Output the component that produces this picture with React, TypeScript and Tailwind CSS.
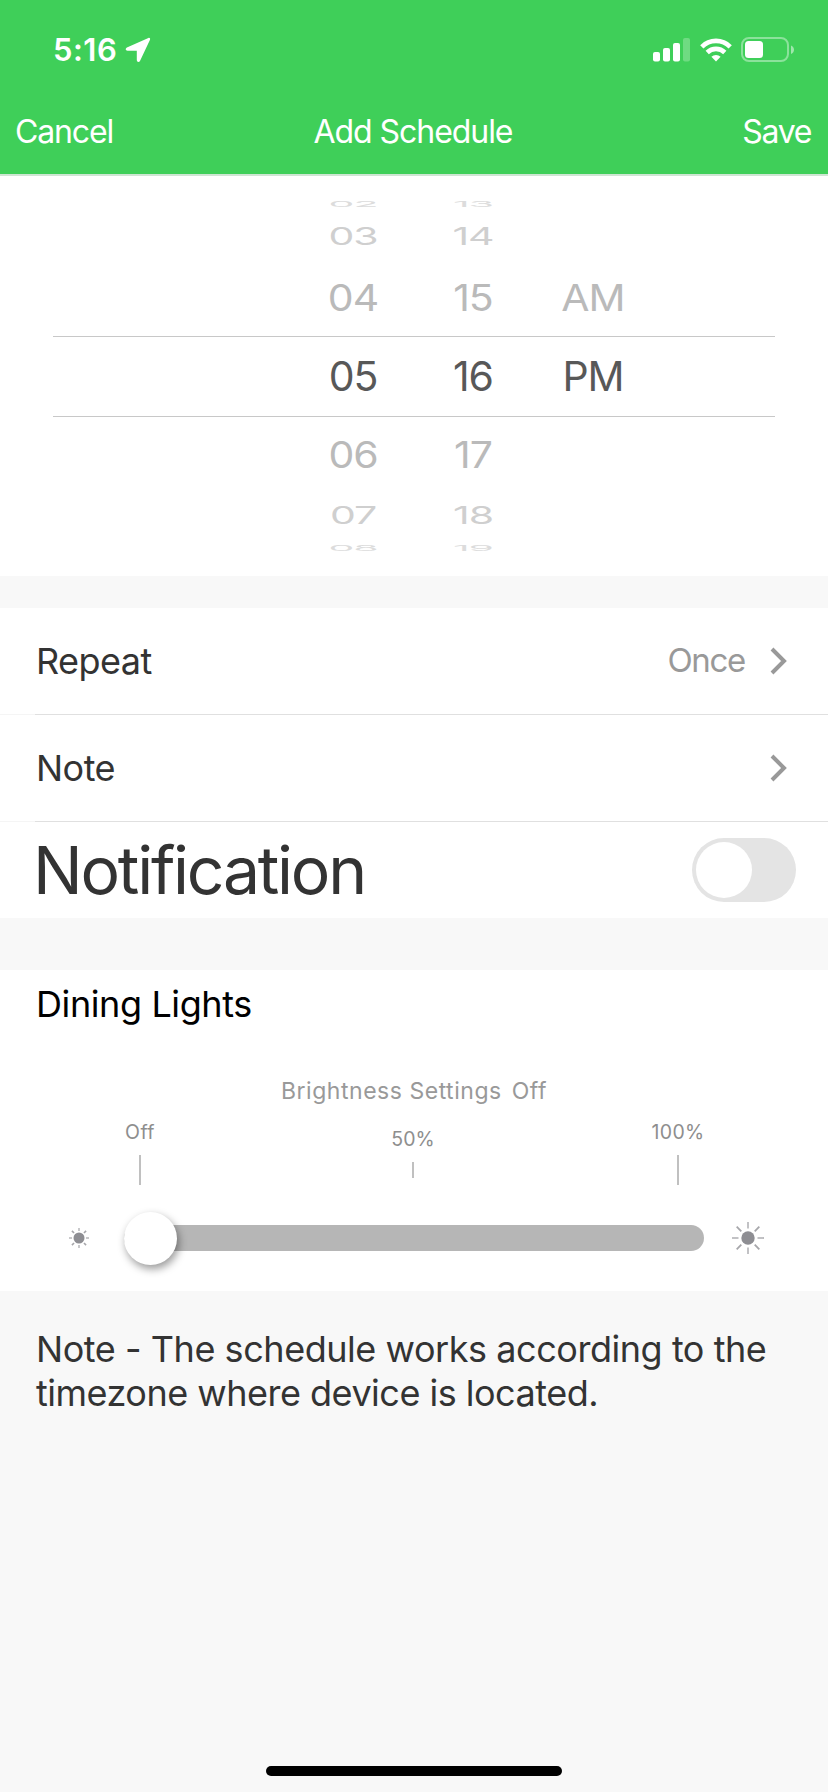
type WheelRow = {
  cells: string[];
  rowClass: string;
  textClass: string;
};

const wheelRows: WheelRow[] = [
  { cells: ["02", "13", ""], rowClass: "h-1.5", textClass: "scale-y-[0.2] text-[#dcdcdc]" },
  { cells: ["03", "14", ""], rowClass: "h-[59px]", textClass: "scale-y-[0.6] text-[#cfcfcf]" },
  { cells: ["04", "15", "AM"], rowClass: "h-[62px] mb-2", textClass: "scale-y-[0.9] text-[#bababa]" },
  { cells: ["05", "16", "PM"], rowClass: "h-[81px]", textClass: "text-[#585858]" },
  { cells: ["06", "17", ""], rowClass: "h-[62px] mt-[6px]", textClass: "scale-y-[0.9] text-[#bababa]" },
  { cells: ["07", "18", ""], rowClass: "h-[61px]", textClass: "scale-y-[0.6] text-[#cfcfcf]" },
  { cells: ["08", "19", ""], rowClass: "h-1", textClass: "scale-y-[0.2] text-[#dcdcdc]" },
];

function StatusBar() {
  return (
    <div className="flex h-[100px] items-center justify-between pl-[53px] pr-[33px] text-white">
      <div className="flex items-center gap-2">
        <span className="text-[31px] font-semibold tracking-[0.015em]">5:16</span>
        <svg width="26" height="26" viewBox="0 0 26 26" fill="currentColor">
          <path d="M23.4 1 1.900 10.500C.1 11.400.5 13.700 2.500 13.700l9.300.1v9.200c0 2.100 2.400 2.600 3.300.700L25 2.700C25.500 1.400 24.600.500 23.400 1z" />
        </svg>
      </div>
      <div className="flex items-center gap-[9px]">
        <svg width="38" height="24" viewBox="0 0 38 24" fill="currentColor">
          <rect x="0" y="14" width="7" height="9.500" rx="2" />
          <rect x="10" y="10" width="7" height="13.500" rx="2" />
          <rect x="20" y="5" width="7" height="18.500" rx="2" />
          <rect x="30" y="0" width="7" height="23.500" rx="2" opacity=".25" />
        </svg>
        <svg width="32" height="24" viewBox="0 0 32 24" fill="none" stroke="currentColor" strokeWidth="4.600">
          <path d="M1.800 8.800a20 20 0 0 1 28.400 0" />
          <path d="M7.200 14.500a12.500 12.500 0 0 1 17.600 0" />
          <path d="M16 23.500l-4.600-4.700a6.500 6.500 0 0 1 9.200 0z" fill="currentColor" stroke="none" />
        </svg>
        <svg width="54" height="26" viewBox="0 0 54 26" fill="currentColor">
          <rect x="1" y="1" width="46" height="23" rx="7" fill="none" stroke="currentColor" strokeWidth="2" opacity=".4" />
          <rect x="4" y="4" width="18" height="17" rx="3.500" />
          <path d="M50 8.500c4 1.500 4 7 0 8.500z" opacity=".5" />
        </svg>
      </div>
    </div>
  );
}

function NavBar() {
  return (
    <div className="grid h-[74px] grid-cols-3 items-start pl-[15px] pr-[17px] pt-3 text-[32px] leading-10 text-white">
      <span className="tracking-[-0.036em]">Cancel</span>
      <span className="whitespace-nowrap text-center tracking-[-0.033em]">Add Schedule</span>
      <span className="text-right tracking-[-0.042em]">Save</span>
    </div>
  );
}

function TimeWheel() {
  return (
    <section className="h-[400px] bg-white px-[53px] pt-[25px]">
      {wheelRows.map((row) => {
        const selected = row.cells[0] === "05";
        return (
          <div
            key={row.cells[0]}
            className={`flex items-center pl-[240px] ${row.rowClass} ${selected ? "border-y border-[#c8c8c8]" : ""}`}
          >
            {row.cells.map((cell, i) => (
              <span
                key={i}
                className={`w-[120px] text-center text-[41px] leading-none tracking-[-0.025em] ${row.textClass}`}
              >
                {cell}
              </span>
            ))}
          </div>
        );
      })}
    </section>
  );
}

function Chevron() {
  return (
    <svg width="17" height="28" viewBox="0 0 17 28" fill="none" stroke="#999" strokeWidth="4">
      <path d="M2 2l12 12L2 26" />
    </svg>
  );
}

function Divider() {
  return (
    <div className="flex h-px">
      <div className="w-[35px] bg-[#f5f5f5]" />
      <div className="flex-1 bg-[#e0e0e0]" />
    </div>
  );
}

function SettingRow({ label, value }: { label: string; value?: string }) {
  return (
    <div className="flex h-[106px] items-center justify-between bg-white pl-9 pr-[41px]">
      <span className="text-[36px] tracking-[-0.015em]">{label}</span>
      <div className="flex items-center gap-[25px]">
        <span className="text-[33px] tracking-[-0.04em] text-[#999]">{value}</span>
        <Chevron />
      </div>
    </div>
  );
}

type SunProps = {
  size: number;
  core: number;
  inner: number;
  ray: number;
};

function Sun({ size, core, inner, ray }: SunProps) {
  const c = size / 2;
  return (
    <svg width={size} height={size} viewBox={`0 0 ${size} ${size}`}>
      <circle cx={c} cy={c} r={core} fill="#8e8e93" />
      {[0, 45, 90, 135, 180, 225, 270, 315].map((angle) => (
        <path
          key={angle}
          d={`M${c} 0V${c - inner}`}
          stroke={angle % 90 === 0 ? "#bcbcbf" : "#a6a6aa"}
          strokeWidth={ray}
          transform={`rotate(${angle} ${c} ${c})`}
        />
      ))}
    </svg>
  );
}

function Brightness() {
  return (
    <section className="h-[321px] bg-white">
      <h2 className="pl-9 pt-[14px] text-[36px] leading-10 tracking-[-0.011em] text-black">Dining Lights</h2>
      <p className="mt-[52px] flex h-[30px] items-center justify-center gap-2.5 text-[23px] text-[#999]">
        <span className="tracking-[0.023em]">Brightness Settings</span>
        <span className="tracking-[0.023em]">Off</span>
      </p>
      <div className="mt-1.5 flex justify-between pl-[100px] pr-[110px] text-[19.500px] leading-6 tracking-[0.02em] text-[#8e8e8e]">
        <div className="flex w-20 flex-col items-center gap-[11px] pt-2">
          <span>Off</span>
          <span className="h-[30px] w-0.5 bg-[#c0c0c0]" />
        </div>
        <div className="ml-2 flex w-20 flex-col items-center gap-[11px] pt-[15px]">
          <span className="tracking-normal">50%</span>
          <span className="h-4 w-0.5 bg-[#c0c0c0]" />
        </div>
        <div className="flex w-20 flex-col items-center gap-[11px] pt-2">
          <span>100%</span>
          <span className="h-[30px] w-0.5 bg-[#c0c0c0]" />
        </div>
      </div>
      <div className="mt-[26px] flex items-center pl-[69px] pr-16">
        <Sun size={20} core={5.5} inner={7} ray={1.6} />
        <div className="ml-[35px] mr-7 flex h-[54px] flex-1 items-center">
          <div className="flex h-[26px] flex-1 items-center rounded-full bg-[#b6b6b6]">
            <div className="size-[53px] rounded-full bg-white shadow-[2px_4px_9px_rgba(0,0,0,0.4)]" />
          </div>
        </div>
        <Sun size={32} core={6.7} inner={9.5} ray={1.8} />
      </div>
    </section>
  );
}

export default function App() {
  return (
    <main className="flex h-[1792px] w-[828px] flex-col bg-[#f8f8f8] font-['Inter',sans-serif] text-[#333]">
      <header className="border-b-2 border-[#cfe5d3] bg-[#3fcf59]">
        <StatusBar />
        <NavBar />
      </header>
      <TimeWheel />

      <section className="mt-8 bg-white">
        <SettingRow label="Repeat" value="Once" />
        <Divider />
        <SettingRow label="Note" />
        <Divider />
        <div className="flex h-24 items-center justify-between pl-[33px] pr-8">
          <span className="text-[66px] leading-none tracking-[-0.034em]">Notification</span>
          <div className="h-16 w-[104px] rounded-full bg-[#e4e4e4] p-1">
            <div className="size-14 rounded-full bg-white" />
          </div>
        </div>
      </section>

      <div className="h-[52px]" />
      <Brightness />

      <p className="pl-9 pt-9 text-[36px] leading-[44px]">
        <span className="block whitespace-nowrap tracking-[-0.0125em]">Note - The schedule works according to the</span>
        <span className="block whitespace-nowrap tracking-[-0.014em]">timezone where device is located.</span>
      </p>

      <div className="mx-auto mb-4 mt-auto h-2.5 w-[296px] rounded-full bg-black" />
    </main>
  );
}
